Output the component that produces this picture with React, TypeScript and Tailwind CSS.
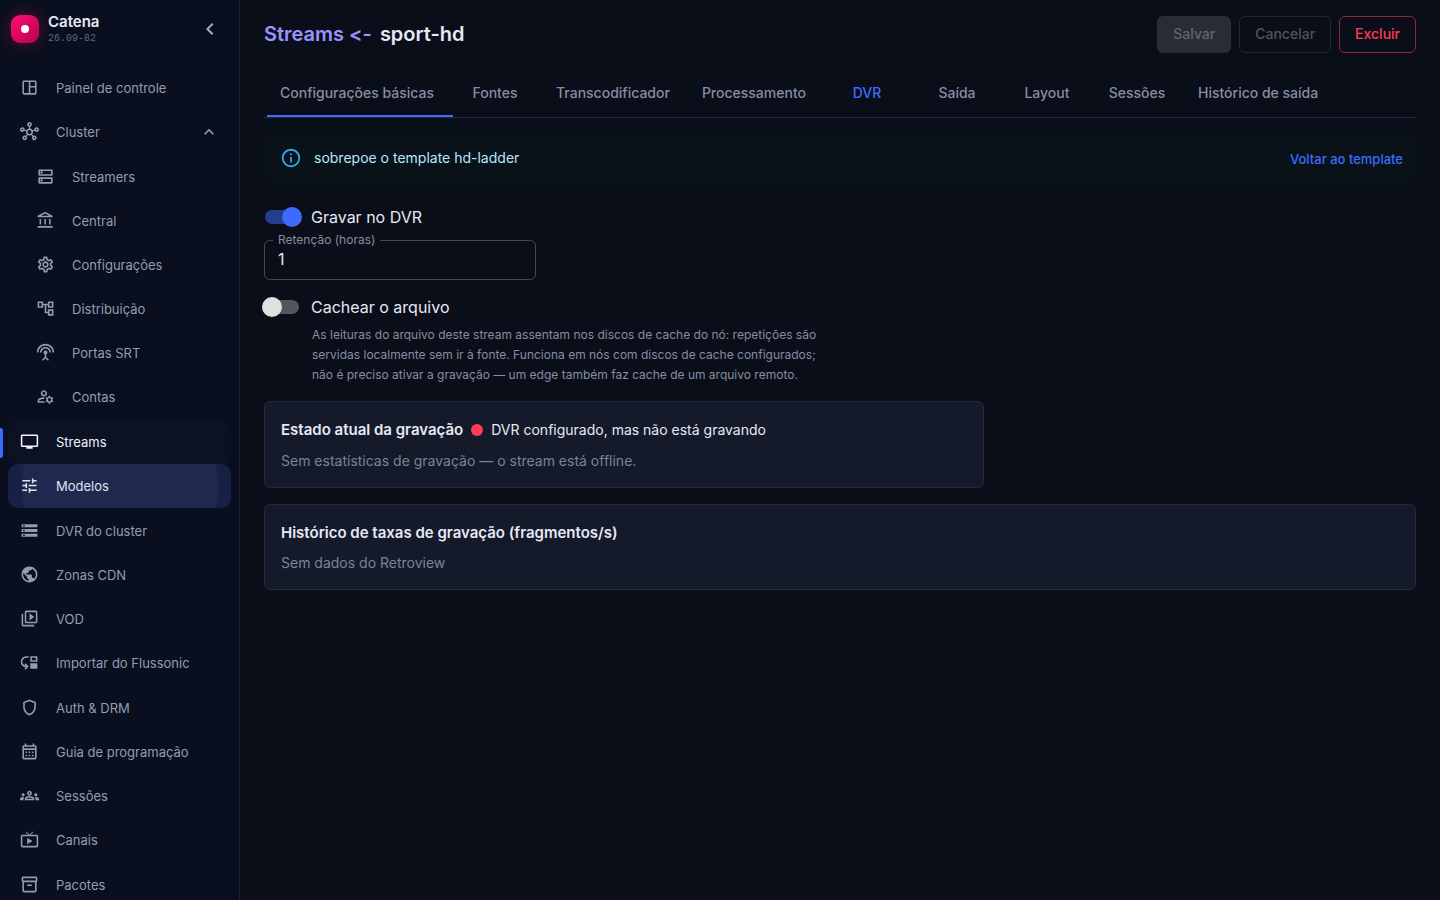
import React from 'react';
import type { IconType } from 'react-icons';
import {
    MdChevronLeft,
    MdExpandLess,
    MdInfoOutline,
    MdMoveDown,
    MdOutlineAccountBalance,
    MdOutlineAccountTree,
    MdOutlineCalendarMonth,
    MdOutlineDns,
    MdOutlineGroups,
    MdOutlineHub,
    MdOutlineInventory2,
    MdOutlineLiveTv,
    MdOutlineManageAccounts,
    MdOutlineSettings,
    MdOutlineShield,
    MdOutlineSpaceDashboard,
    MdOutlineVideoLibrary,
    MdPublic,
    MdSettingsInputAntenna,
    MdStorage,
    MdTune,
    MdTv,
} from 'react-icons/md';
import { clsx } from 'clsx';

interface NavItem {
    label: string;
    icon: IconType;
    state?: 'active' | 'pressed';
    nested?: boolean;
    expanded?: boolean;
}

const navSections: NavItem[][] = [
    [
        { label: 'Painel de controle', icon: MdOutlineSpaceDashboard },
        { label: 'Cluster', icon: MdOutlineHub, expanded: true },
    ],
    [
        { label: 'Streamers', icon: MdOutlineDns, nested: true },
        { label: 'Central', icon: MdOutlineAccountBalance, nested: true },
        { label: 'Configurações', icon: MdOutlineSettings, nested: true },
        { label: 'Distribuição', icon: MdOutlineAccountTree, nested: true },
        { label: 'Portas SRT', icon: MdSettingsInputAntenna, nested: true },
        { label: 'Contas', icon: MdOutlineManageAccounts, nested: true },
    ],
    [
        { label: 'Streams', icon: MdTv, state: 'active' },
        { label: 'Modelos', icon: MdTune, state: 'pressed' },
    ],
    [
        { label: 'DVR do cluster', icon: MdStorage },
        { label: 'Zonas CDN', icon: MdPublic },
        { label: 'VOD', icon: MdOutlineVideoLibrary },
        { label: 'Importar do Flussonic', icon: MdMoveDown },
    ],
    [
        { label: 'Auth & DRM', icon: MdOutlineShield },
        { label: 'Guia de programação', icon: MdOutlineCalendarMonth },
        { label: 'Sessões', icon: MdOutlineGroups },
        { label: 'Canais', icon: MdOutlineLiveTv },
    ],
    [{ label: 'Pacotes', icon: MdOutlineInventory2 }],
];

const tabs = [
    'Configurações básicas',
    'Fontes',
    'Transcodificador',
    'Processamento',
    'DVR',
    'Saída',
    'Layout',
    'Sessões',
    'Histórico de saída',
];

const NavLink: React.FC<{ item: NavItem }> = ({ item }) => {
    const Icon = item.icon;
    return (
        <li className="relative px-2">
            {item.state === 'active' && <span className="absolute left-0 top-2 h-[30px] w-[3px] rounded-r bg-[#3d6bff]" />}
            <a
                href="#"
                className={clsx(
                    'relative flex h-11 items-center gap-[17px] overflow-hidden rounded-[10px] pb-px pr-3 text-[13px] leading-5',
                    item.nested ? 'pl-7' : 'pl-3',
                    !item.state && 'text-[#949cb4]',
                    item.state === 'active' && 'bg-[#0c1224] text-[#f1f3fa]',
                    item.state === 'pressed' && 'bg-[#172146] text-[#dfe4f3]',
                )}
            >
                {/* press ripple */}
                {item.state === 'pressed' && (
                    <span className="absolute left-1/2 top-1/2 size-[197px] -translate-1/2 rounded-full bg-[#1f294d]" />
                )}
                <Icon className="relative size-[19px] shrink-0" />
                <span className="relative flex-1 pt-px">{item.label}</span>
                {item.expanded && <MdExpandLess className="size-5" />}
            </a>
        </li>
    );
};

const Sidebar: React.FC = () => (
    <aside className="flex w-60 shrink-0 flex-col overflow-hidden border-r border-[#1b2233] bg-[#090f1e]">
        <div className="flex h-[66px] shrink-0 items-start gap-[9px] px-[11px] pt-3">
            <div className="mt-[3px] flex size-7 items-center justify-center rounded-[9px] bg-linear-to-br from-[#ff0f72] to-[#b3044e] shadow-[0_0_16px_rgba(255,15,114,0.35)]">
                <span className="size-2 rounded-full bg-white" />
            </div>
            <div className="flex-1">
                <p className="text-[15px] font-semibold leading-5 text-[#e6e9f5]">Catena</p>
                <p className="font-['Liberation_Mono',monospace] text-[10px] leading-[14px] text-[#5f677e]">26.09-82</p>
            </div>
            <button type="button" aria-label="Recolher menu" className="mr-1.5 mt-[5px] flex size-6 items-center justify-center text-[#a3abc2]">
                <MdChevronLeft className="size-6" />
            </button>
        </div>
        <nav className="flex flex-col gap-px">
            {navSections.map((section, index) => (
                <ul key={index}>
                    {section.map((item) => (
                        <NavLink key={item.label} item={item} />
                    ))}
                </ul>
            ))}
        </nav>
    </aside>
);

interface SwitchProps {
    id: string;
    label: string;
    defaultChecked?: boolean;
}

const Switch: React.FC<SwitchProps> = ({ id, label, defaultChecked }) => (
    <div className="flex h-6 items-center gap-3">
        <span className="relative ml-px flex h-5 w-[34px] items-center">
            <input id={id} type="checkbox" role="switch" defaultChecked={defaultChecked} className="peer absolute inset-0 z-10 opacity-0" />
            <span className="h-3.5 w-full rounded-full bg-[#54565f] peer-checked:bg-[#243d8e]" />
            <span className="absolute -left-[3px] size-5 rounded-full bg-[#e0e0e0] peer-checked:left-[17px] peer-checked:bg-[#3d6bff]" />
        </span>
        <label htmlFor={id} className="text-base text-[#e6e9f5]">
            {label}
        </label>
    </div>
);

const Main: React.FC = () => (
    <main className="min-w-0 flex-1 px-6 pt-4">
        <header className="flex h-[37px] items-start justify-between">
            <h1 className="flex gap-2 text-xl font-semibold leading-9">
                {/* Inter would turn "<-" into an arrow */}
                <a href="#" className="text-[#9a94ff] [font-variant-ligatures:none]">
                    Streams &lt;-
                </a>
                <span className="text-[#e6e9f5]">sport-hd</span>
            </h1>
            <div className="flex gap-2 text-sm font-medium">
                <button type="button" disabled className="h-[37px] rounded-md bg-[#292b35] px-4 pb-0.5 text-[#63656e]">
                    Salvar
                </button>
                <button type="button" disabled className="h-[37px] rounded-md border border-[#242732] px-[15px] pb-0.5 text-[#50535d]">
                    Cancelar
                </button>
                <button type="button" className="h-[37px] rounded-md border border-[#92263c] px-[15px] pb-0.5 text-[#ff3b57]">
                    Excluir
                </button>
            </div>
        </header>

        <div role="tablist" className="mt-4 flex h-[49px] border-b border-[#24283a] text-sm font-medium">
            {tabs.map((tab, index) => (
                <button
                    key={tab}
                    type="button"
                    role="tab"
                    aria-selected={tab === 'DVR'}
                    className={clsx('relative min-w-[90px] px-4', tab === 'DVR' ? 'text-[#3d6bff]' : 'text-[#868da2]')}
                >
                    {tab}
                    {/* indicator is still sliding from the first tab */}
                    {index === 0 && <span className="absolute bottom-0 left-[3px] h-0.5 w-full bg-[#3d6bff]" />}
                </button>
            ))}
        </div>

        <div className="mt-4 flex h-12 items-center gap-3 rounded-md bg-[#081218] pl-4 pr-[13px]">
            <MdInfoOutline className="size-[22px] text-[#29a9e6]" />
            <p className="flex-1 text-sm text-[#b8e7fb]">sobrepoe o template hd-ladder</p>
            <button type="button" className="pt-[3px] text-[13px] font-medium text-[#3d6bff]">
                Voltar ao template
            </button>
        </div>

        <div className="mt-[23px]">
            <Switch id="record" label="Gravar no DVR" defaultChecked />
        </div>
        <div className="relative mt-[11px] w-[272px]">
            <label htmlFor="retention" className="absolute -top-2 left-[9px] bg-[#0a0e18] px-[5px] text-xs text-[#868da2]">
                Retenção (horas)
            </label>
            <input
                id="retention"
                type="text"
                defaultValue="1"
                className="block h-10 w-full rounded-md border border-[#454852] bg-transparent px-[13px] pb-0.5 text-base text-[#e6e9f5]"
            />
        </div>
        <div className="mt-[15px]">
            <Switch id="cache" label="Cachear o arquivo" />
        </div>
        <p className="ml-12 mt-1.5 max-w-lg text-xs leading-5 text-[#868da2]">
            As leituras do arquivo deste stream assentam nos discos de cache do nó: repetições são servidas localmente sem ir à
            fonte. Funciona em nós com discos de cache configurados; não é preciso ativar a gravação — um edge também faz cache de
            um arquivo remoto.
        </p>

        <section className="mt-4 max-w-[720px] rounded-md border border-[#232a3c] bg-[#151a2a] p-4">
            <div className="flex h-6 items-center gap-2">
                <h2 className="text-[15px] font-semibold text-[#e6e9f5]">Estado atual da gravação</h2>
                <span className="size-3 rounded-full bg-[#ff3b57]" />
                <span className="text-sm text-[#e6e9f5]">DVR configurado, mas não está gravando</span>
            </div>
            <p className="mt-2 text-sm leading-[21px] text-[#7b8295]">Sem estatísticas de gravação — o stream está offline.</p>
        </section>
        <section className="mt-4 rounded-md border border-[#232a3c] bg-[#151a2a] p-4">
            <h2 className="text-[15px] font-semibold leading-6 text-[#e6e9f5]">Histórico de taxas de gravação (fragmentos/s)</h2>
            <p className="mt-2 text-sm text-[#7b8295]">Sem dados do Retroview</p>
        </section>
    </main>
);

export default function App() {
    return (
        <div className="flex h-screen overflow-hidden bg-[#0a0e18] font-['Inter',sans-serif]">
            <Sidebar />
            <Main />
        </div>
    );
}
